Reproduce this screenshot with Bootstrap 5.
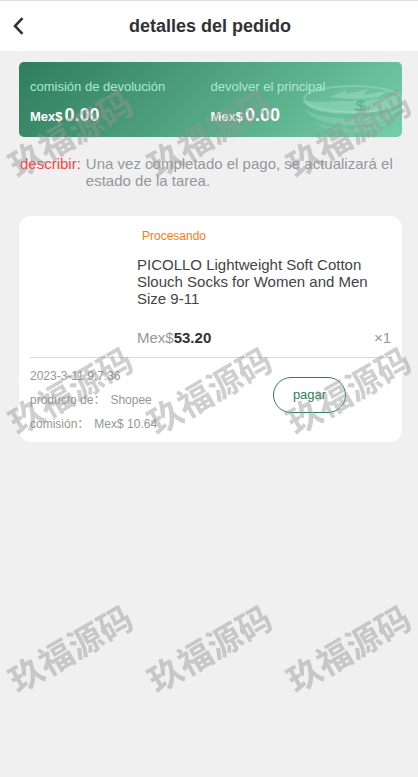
<!DOCTYPE html>
<html lang="es">
<head>
<meta charset="utf-8">
<meta name="viewport" content="width=device-width, initial-scale=1">
<title>detalles del pedido</title>
<link href="https://cdn.jsdelivr.net/npm/bootstrap@5.3.0/dist/css/bootstrap.min.css" rel="stylesheet">
<style>
body { background: #f0f0f0; font-family: "Liberation Sans", Arial, "Noto Sans CJK SC", sans-serif; color: #323233; font-size: 15px; line-height: 17px; }
.topbar { border-top: 1px solid #dfdfdf; height: 51px; }
.topbar h1 { font-size: 18px; line-height: 24px; padding-right: 36px; }
.back { color: #323233; width: 38px; line-height: 0; }
main { padding: 11px 16px 0 19px; }
.summary { background: linear-gradient(135deg, #2f7d5c, #75cea8); border-radius: 5px; padding: 16px 11px 11px; height: 75px; color: #fff; font-size: 13px; line-height: 18px; }
.summary dt { color: #abe9ce; }
.summary dd { margin-top: 8px; line-height: 22px; }
.amount { font-size: 18px; margin-left: 2px; }
.coins { right: 0; top: 13px; }
.note { margin-top: 18px; gap: 5px; padding-left: 1px; color: #969799; }
.note-label { color: #fb4340; }
.order { margin-top: 27px; border-radius: 12px; padding: 12px 11px 6px; }
.thumb { width: 107px; }
.state { color: #ff7a0f; font-size: 12px; line-height: 16px; padding-left: 5px; }
.product { font-size: 15px; line-height: 17px; margin-top: 12px; color: #444; }
.price-line { margin-top: 22px; color: #969799; }
.price-line strong { color: #323233; }
.foot { border-top: 1px solid #d9d9d9; margin-top: 11px; padding-top: 6px; font-size: 12px; line-height: 24px; color: #969696; }
.foot-value { margin-left: 5px; }
.pay { width: 73px; height: 36px; margin-right: 45px; margin-top: 13px; padding: 0; border: 1px solid #2f7d5c; border-radius: 18px; color: #2f7d5c; background: #fff; font-size: 13px; line-height: 18px; }
.stamps { display: grid; grid-template: repeat(3, 1fr) / repeat(3, minmax(0, 1fr)); place-items: center; pointer-events: none; z-index: 1040; padding-top: 4px; }
.stamps span { font: 700 34px/56px "Noto Sans CJK SC", sans-serif; color: #969696; opacity: .46; white-space: nowrap; transform: rotate(-30deg); }
</style>
<script src="https://cdn.jsdelivr.net/npm/bootstrap@5.3.0/dist/js/bootstrap.bundle.min.js" defer></script>
</head>
<body>
<header class="topbar bg-white d-flex align-items-center">
  <button type="button" class="back btn border-0 p-0" aria-label="Volver">
    <svg width="12" height="18" viewBox="0 0 12 18" fill="none" stroke="currentColor" stroke-width="2.6" aria-hidden="true"><path d="M9.500 1.200 2 9l7.500 7.800"/></svg>
  </button>
  <h1 class="flex-grow-1 text-center fw-bold m-0">detalles del pedido</h1>
</header>
<main>
  <section class="summary position-relative overflow-hidden">
    <svg class="coins position-absolute" width="101" height="57" viewBox="0 0 101 57" aria-hidden="true">
      <g fill="#b8ecd6">
        <path opacity=".3" d="M3 25C12 28 34 26 50 26C72 26 90 22 99 19C101 30 84 39 50 39C20 39 5 34 3 25Z"/>
        <path opacity=".22" d="M4 34C18 46 80 47 99 32C92 47 70 50 50 50C24 50 8 43 4 34Z"/>
        <path opacity=".13" d="M12 46C28 55 76 55 92 45C80 56 60 57 50 57C32 57 18 53 12 46Z"/>
        <path opacity=".34" d="M28 22 46 15l-1 4 22-5-5 6 25-4-10 6C60 25 42 24 28 22Z"/>
      </g>
      <ellipse cx="52" cy="24" rx="49" ry="13" fill="#b8ecd6" fill-opacity=".06" stroke="#b8ecd6" stroke-opacity=".32" stroke-width="2"/>
      <path d="M64 27C59 25 54 28 57 30c2 1 7 0 7 3 0 2-6 3-10 1M60 25v11" fill="none" stroke="#4ba67e" stroke-opacity=".6" stroke-width="2"/>
    </svg>
    <dl class="row g-0 m-0 position-relative">
      <div class="col-6"><dt class="fw-normal">comisión de devolución</dt><dd class="fw-bold mb-0">Mex$<span class="amount">0.00</span></dd></div>
      <div class="col-6"><dt class="fw-normal">devolver el principal</dt><dd class="fw-bold mb-0">Mex$<span class="amount">0.00</span></dd></div>
    </dl>
  </section>
  <div class="note d-flex">
    <span class="note-label">describir:</span>
    <p class="m-0">Una vez completado el pago, se actualizará el estado de la tarea.</p>
  </div>
  <article class="order bg-white">
    <div class="d-flex">
      <div class="thumb flex-shrink-0"></div>
      <div class="flex-grow-1">
        <div class="state">Procesando</div>
        <h2 class="product fw-normal mb-0">PICOLLO Lightweight Soft Cotton Slouch Socks for Women and Men Size 9-11</h2>
        <div class="price-line d-flex justify-content-between"><span>Mex$<strong>53.20</strong></span><span>×1</span></div>
      </div>
    </div>
    <div class="foot d-flex justify-content-between align-items-start">
      <div>
        <div>2023-3-11 9:7:36</div>
        <div>producto de：<span class="foot-value">Shopee</span></div>
        <div>comisión：<span class="foot-value">Mex$ 10.64</span></div>
      </div>
      <button type="button" class="pay btn">pagar</button>
    </div>
  </article>
</main>
<div class="stamps position-fixed top-0 start-0 w-100 h-100" aria-hidden="true">
  <span>玖福源码</span><span>玖福源码</span><span>玖福源码</span>
  <span>玖福源码</span><span>玖福源码</span><span>玖福源码</span>
  <span>玖福源码</span><span>玖福源码</span><span>玖福源码</span>
</div>
</body>
</html>
